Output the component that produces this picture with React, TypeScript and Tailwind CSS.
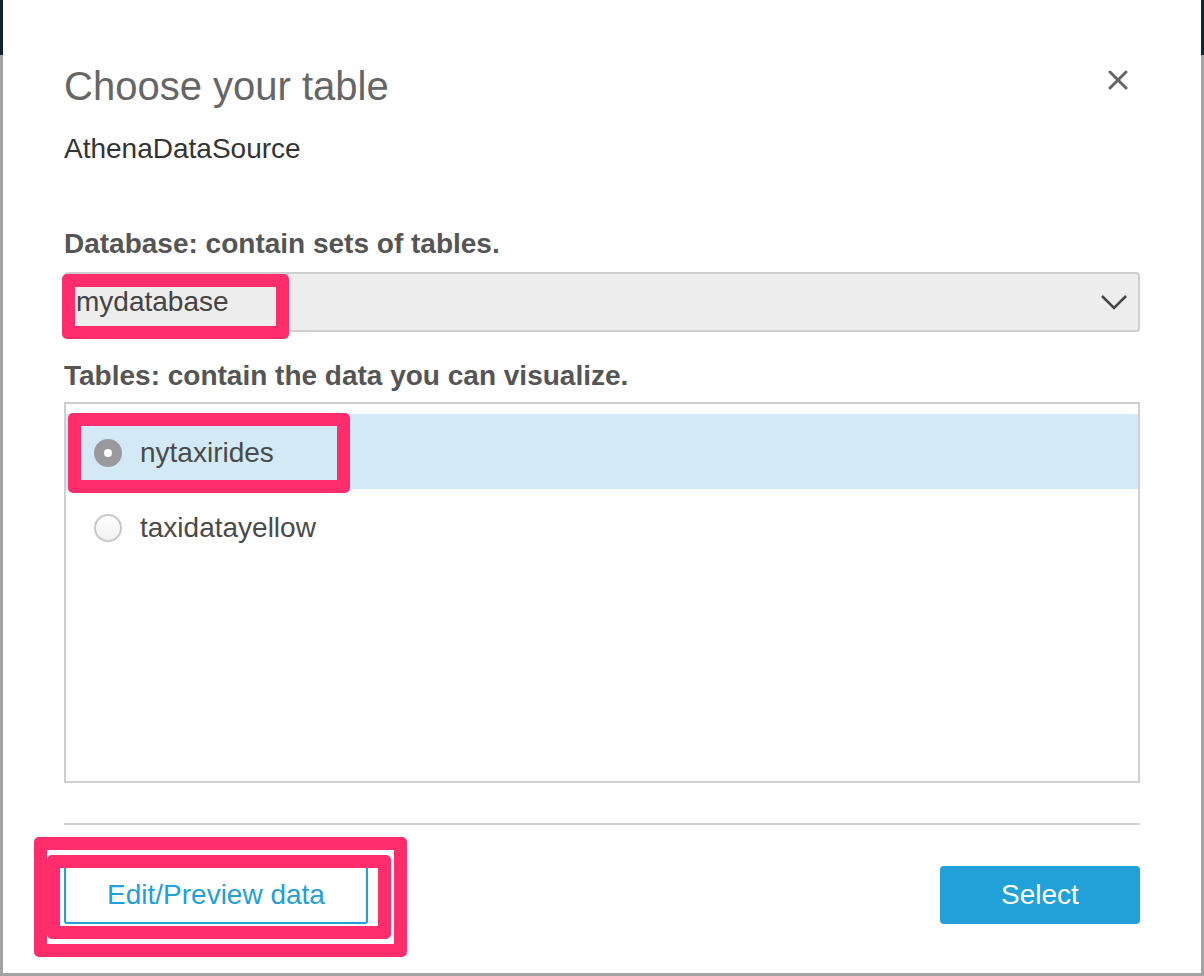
import React from 'react';

const font = { fontFamily: '"Liberation Sans", Arial, sans-serif' };

function Annotation({ className }: { className: string }) {
  return <div className={`pointer-events-none absolute rounded-[5px] border-[13px] border-[#ff2d6b] ${className}`} />;
}

function Radio({ checked }: { checked: boolean }) {
  if (checked) {
    return (
      <span className="flex h-[28px] w-[28px] items-center justify-center rounded-full bg-[#9a999e]">
        <span className="h-[8px] w-[8px] rounded-full bg-white" />
      </span>
    );
  }
  return <span className="h-[28px] w-[28px] rounded-full border-2 border-[#c8c8c8] bg-gradient-to-b from-white to-[#f1f1f1]" />;
}

export default function App() {
  const tables = [
    { name: 'nytaxirides', selected: true },
    { name: 'taxidatayellow', selected: false },
  ];

  return (
    <div
      style={font}
      className="w-[1204px] h-[976px] overflow-hidden bg-[linear-gradient(to_bottom,#13262f_55px,#a3a3a3_55px)] pl-[3px] pr-[3px] pb-[3px]"
    >
      {/* Modal */}
      <div className="relative h-full w-full bg-white pl-[61px] pr-[61px] pt-[62px]">
        <button className="absolute left-[1102px] top-[67px] flex h-[26px] w-[26px] items-center justify-center">
          <svg width="20" height="20" viewBox="0 0 20 20">
            <path d="M2 2 L18 18 M18 2 L2 18" stroke="#666" strokeWidth="3" strokeLinecap="round" />
          </svg>
        </button>

        <h1 className="text-[40px] leading-[48px] text-[#666]">Choose your table</h1>
        <p className="mt-[23px] text-[28px] leading-[32px] text-[#333]">AthenaDataSource</p>

        <label className="mt-[63px] block text-[28px] font-bold leading-[32px] text-[#555]">
          Database: contain sets of tables.
        </label>
        <div className="relative mt-[12px]">
          <div className="flex h-[60px] items-center justify-between rounded-[4px] border-2 border-[#cfcfcf] bg-[#ededed] pl-[10px] pr-[10px]">
            <span className="text-[28px] text-[#444]">mydatabase</span>
            <svg width="28" height="16" viewBox="0 0 28 16">
              <path d="M2 2 L14 14 L26 2" fill="none" stroke="#444" strokeWidth="2.5" />
            </svg>
          </div>
          <Annotation className="-left-[2px] top-[2px] h-[65px] w-[227px]" />
        </div>

        <label className="mt-[28px] block text-[28px] font-bold leading-[32px] text-[#555]">
          Tables: contain the data you can visualize.
        </label>
        <div className="mt-[10px] h-[381px] border-2 border-[#cfcfcf] pt-[10px]">
          {tables.map((t) => (
            <div
              key={t.name}
              className={`relative flex h-[75px] items-center gap-[18px] pl-[28px] pt-[2px] ${t.selected ? 'bg-[#d3eaf6]' : ''}`}
            >
              <Radio checked={t.selected} />
              <span className="text-[28px] text-[#4a4a4a]">{t.name}</span>
              {t.selected && <Annotation className="left-[2px] -top-[1px] h-[80px] w-[282px]" />}
            </div>
          ))}
        </div>

        <div className="mt-[40px] h-[2px] bg-[#cfcfcf]" />

        <div className="mt-[41px] flex items-center justify-between">
          <div className="relative">
            <button className="flex h-[58px] w-[304px] items-center justify-center rounded-[3px] border-2 border-[#22a0d8] bg-white text-[28px] text-[#22a0d8]">
              Edit/Preview data
            </button>
            <Annotation className="-left-[30px] -top-[29px] h-[120px] w-[373px]" />
            <Annotation className="-left-[17px] -top-[11px] h-[84px] w-[344px]" />
          </div>
          <button className="flex h-[58px] w-[200px] items-center justify-center rounded-[4px] bg-[#22a0d8] text-[28px] text-white">
            Select
          </button>
        </div>
      </div>
    </div>
  );
}
